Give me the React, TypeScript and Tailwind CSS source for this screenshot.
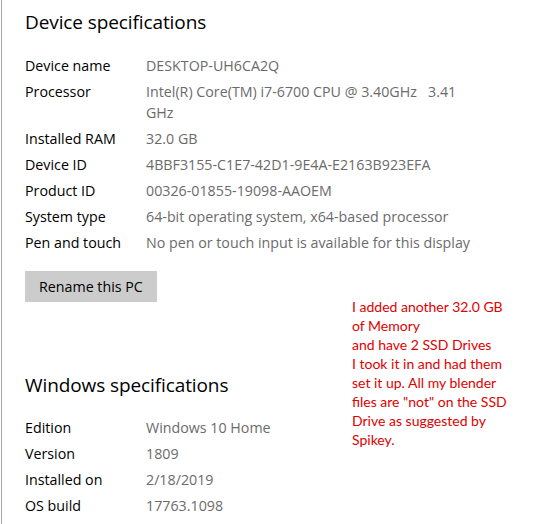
import React from "react";

const device: [string, React.ReactNode, boolean?][] = [
  ["Device name", "DESKTOP-UH6CA2Q"],
  [
    "Processor",
    <>
      Intel(R) Core(TM) i7-6700 CPU @ 3.40GHz&nbsp;&nbsp;&nbsp;3.41
      <br />
      GHz
    </>,
    true,
  ],
  ["Installed RAM", "32.0 GB"],
  ["Device ID", "4BBF3155-C1E7-42D1-9E4A-E2163B923EFA"],
  ["Product ID", "00326-01855-19098-AAOEM"],
  ["System type", "64-bit operating system, x64-based processor"],
  ["Pen and touch", "No pen or touch input is available for this display"],
];

const windows: [string, string][] = [
  ["Edition", "Windows 10 Home"],
  ["Version", "1809"],
  ["Installed on", "2/18/2019"],
  ["OS build", "17763.1098"],
];

function Row({ label, value, tall }: { label: string; value: React.ReactNode; tall?: boolean }) {
  return (
    <div className={`flex items-start pt-[3px] ${tall ? "h-[47px]" : "h-[26px]"}`}>
      <div className="w-[121px] shrink-0 text-black leading-[21px]">{label}</div>
      <div className="text-[#6b6b6b] leading-[21px]">{value}</div>
    </div>
  );
}

export default function App() {
  return (
    <div className="relative w-[539px] h-[524px] bg-white overflow-hidden">
      <div
        className="ml-[1px] h-full border-l border-[#a8a8a8] pl-[23px] text-[14.25px]"
        style={{ fontFamily: '"Open Sans", "Noto Sans", sans-serif' }}
      >
        <h2 className="pt-[8px] h-[36px] text-[19px] leading-[28px] text-black tracking-[-0.1px]">
          Device specifications
        </h2>
        <div className="mt-[16px] flex flex-col">
          {device.map(([l, v, t]) => (
            <Row key={l} label={l} value={v} tall={t} />
          ))}
        </div>
        <button className="mt-[16px] h-[31px] px-[14px] bg-[#cccccc] text-black text-[14.25px] leading-[31px]">
          Rename this PC
        </button>
        <h2 className="mt-[69px] h-[28px] text-[19px] leading-[28px] text-black tracking-[-0.1px]">
          Windows specifications
        </h2>
        <div className="mt-[15px] flex flex-col">
          {windows.map(([l, v]) => (
            <Row key={l} label={l} value={v} />
          ))}
        </div>
      </div>
      <div
        className="absolute left-[352px] top-[297px] text-[14px] leading-[19px] text-[#e00000]"
        style={{ fontFamily: "Lato, sans-serif" }}
      >
        I added another 32.0 GB
        <br />
        of Memory
        <br />
        and have 2 SSD Drives
        <br />
        I took it in and had them
        <br />
        set it up. All my blender
        <br />
        files are "not" on the SSD
        <br />
        Drive as suggested by
        <br />
        Spikey.
      </div>
    </div>
  );
}
